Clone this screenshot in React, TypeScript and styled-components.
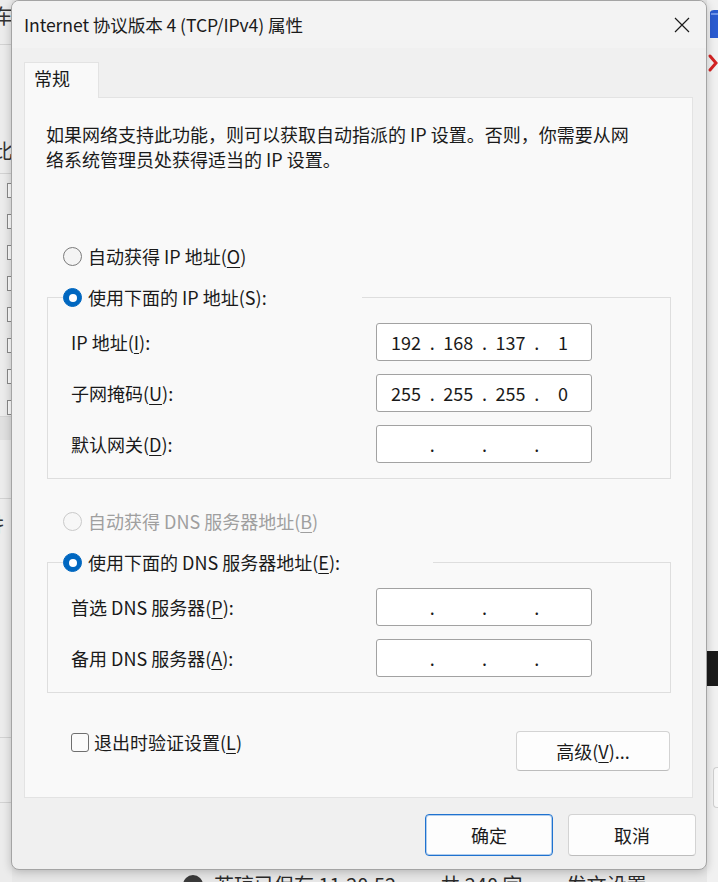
import React from 'react';
import styled, { createGlobalStyle } from 'styled-components';

const GlobalStyle = createGlobalStyle`
  html, body { margin: 0; padding: 0; }
  body {
    font-family: "Noto Sans CJK SC", "Noto Sans", sans-serif;
    background: #e9e9e9;
    color: #1a1a1a;
  }
  * { box-sizing: border-box; }
`;

type IpProps = { octets?: string[] };

const IpField = ({ octets = ['', '', '', ''] }: IpProps) => (
  <IpBox>
    {octets.map((o, i) => (
      <React.Fragment key={i}>
        <Octet>{o}</Octet>
        {i < 3 && <Dot>.</Dot>}
      </React.Fragment>
    ))}
  </IpBox>
);

type RadioProps = { checked?: boolean; disabled?: boolean; children: React.ReactNode };

const Radio = ({ checked, disabled, children }: RadioProps) => (
  <RadioLabel $disabled={disabled}>
    <RadioDot $checked={checked} $disabled={disabled} />
    <span>{children}</span>
  </RadioLabel>
);

const App = () => {
  return (
    <Desktop>
      <GlobalStyle />

      {/* the window behind the dialog, only slivers of it show */}
      <LeftPeek>
        <PeekChar $top={4}>车</PeekChar>
        <PeekRule $top={16} />
        <PeekChar $top={94}>比</PeekChar>
        <PeekRule $top={10} />
        <PeekChecks>
          {[1, 1, 1, 1, 1, 1, 1, 0].map((c, i) => (
            <PeekCheck key={i} $on={!!c} />
          ))}
        </PeekChecks>
        <PeekBand />
        <PeekRule $top={58} />
        <PeekChar $top={14}>扌</PeekChar>
        <PeekRule $top={200} />
        <PeekRule $top={64} />
      </LeftPeek>

      <RightPeek>
        <svg width="11" height="80" viewBox="0 0 11 80">
          <path d="M3 12 Q4 10 7 10 L11 10 L11 38 L3 38 Z" fill="#2a5bd0" />
          <path d="M4 14 L11 14" stroke="#6f95ea" strokeWidth="2" />
          <path d="M3 56 L9 63 L3 70" stroke="#d42323" strokeWidth="3" fill="none" strokeLinecap="round" />
        </svg>
        <DarkBand />
        <PeekBox />
      </RightPeek>

      <StatusLine>
        <StatusIcon />
        <span>若琼已保存 11:20:52</span>
        <span>共 240 字</span>
        <span>发文设置</span>
      </StatusLine>

      <Dialog>
        <TitleBar>
          <TitleText>Internet 协议版本 4 (TCP/IPv4) 属性</TitleText>
          <CloseButton aria-label="关闭">
            <svg width="16" height="16" viewBox="0 0 16 16">
              <path d="M1 1 L15 15 M15 1 L1 15" stroke="#1a1a1a" strokeWidth="1.2" />
            </svg>
          </CloseButton>
        </TitleBar>

        <Body>
          <TabStrip>
            <Tab>常规</Tab>
          </TabStrip>

          <Panel>
            <Description>
              如果网络支持此功能，则可以获取自动指派的 IP 设置。否则，你需要从网
              <br />
              络系统管理员处获得适当的 IP 设置。
            </Description>

            <LooseRadio $top={72}>
              <Radio>
                自动获得 IP 地址(<Key>O</Key>)
              </Radio>
            </LooseRadio>

            <Group $top={16}>
              <GroupLegend $width={299}>
                <Radio checked>使用下面的 IP 地址(S):</Radio>
              </GroupLegend>
              <FieldGrid>
                <FieldLabel>
                  IP 地址(<Key>I</Key>):
                </FieldLabel>
                <IpField octets={['192', '168', '137', '1']} />
                <FieldLabel>
                  子网掩码(<Key>U</Key>):
                </FieldLabel>
                <IpField octets={['255', '255', '255', '0']} />
                <FieldLabel>
                  默认网关(<Key>D</Key>):
                </FieldLabel>
                <IpField />
              </FieldGrid>
            </Group>

            <LooseRadio $top={30}>
              <Radio disabled>
                自动获得 DNS 服务器地址(<Key>B</Key>)
              </Radio>
            </LooseRadio>

            <Group $top={16}>
              <GroupLegend $width={370}>
                <Radio checked>
                  使用下面的 DNS 服务器地址(<Key>E</Key>):
                </Radio>
              </GroupLegend>
              <FieldGrid>
                <FieldLabel>
                  首选 DNS 服务器(<Key>P</Key>):
                </FieldLabel>
                <IpField />
                <FieldLabel>
                  备用 DNS 服务器(<Key>A</Key>):
                </FieldLabel>
                <IpField />
              </FieldGrid>
            </Group>

            <BottomRow>
              <CheckLabel>
                <CheckBox />
                <span>
                  退出时验证设置(<Key>L</Key>)
                </span>
              </CheckLabel>
              <AdvancedButton>
                高级(<Key>V</Key>)...
              </AdvancedButton>
            </BottomRow>
          </Panel>

          <Footer>
            <DialogButton $primary>确定</DialogButton>
            <DialogButton>取消</DialogButton>
          </Footer>
        </Body>
      </Dialog>
    </Desktop>
  );
};

export default App;

const Desktop = styled.div`
  position: relative;
  width: 718px;
  height: 882px;
  overflow: hidden;
  background: #e7e7e7;
`;

const LeftPeek = styled.div`
  position: absolute;
  left: 0;
  top: 0;
  width: 12px;
  height: 882px;
  background: #ececec;
  display: flex;
  flex-direction: column;
  overflow: hidden;
`;

const PeekChar = styled.div<{ $top: number }>`
  margin-top: ${p => p.$top}px;
  margin-left: -7px;
  font-size: 20px;
  line-height: 24px;
  color: #333;
  flex: none;
`;

const PeekRule = styled.div<{ $top: number }>`
  margin-top: ${p => p.$top}px;
  height: 1px;
  background: #d2d2d2;
  flex: none;
`;

const PeekChecks = styled.div`
  margin-top: 9px;
  padding-left: 7px;
  display: flex;
  flex-direction: column;
  gap: 16px;
`;

const PeekCheck = styled.div<{ $on: boolean }>`
  width: 14px;
  height: 15px;
  border: 1px solid #8a8a8a;
  background: #fff;
  box-shadow: ${p => (p.$on ? 'inset 3px 0 0 1px #fff, inset 6px 0 0 #555' : 'none')};
`;

const PeekBand = styled.div`
  margin-top: 1px;
  height: 24px;
  background: #e0e0e0;
  border-top: 1px solid #d4d4d4;
  flex: none;
`;

const RightPeek = styled.div`
  position: absolute;
  left: 707px;
  top: 0;
  width: 11px;
  height: 882px;
  background: #f1f1f1;
  display: flex;
  flex-direction: column;
`;

const DarkBand = styled.div`
  margin-top: 571px;
  height: 35px;
  background: #1b1b1b;
  flex: none;
`;

const PeekBox = styled.div`
  margin: 81px 0 0 6px;
  height: 41px;
  border: 1px solid #d0d0d0;
  border-right: none;
  border-radius: 4px 0 0 4px;
  background: #f8f8f8;
  flex: none;
`;

const StatusLine = styled.div`
  position: absolute;
  left: 183px;
  top: 872px;
  display: flex;
  align-items: flex-start;
  gap: 44px;
  font-size: 20px;
  line-height: 26px;
  color: #2a2a2a;
  white-space: nowrap;

  span:first-of-type {
    margin-left: -33px;
  }
`;

const StatusIcon = styled.div`
  width: 20px;
  height: 20px;
  margin-top: 3px;
  border-radius: 50%;
  background: #3a3a3a;
`;

const Dialog = styled.div`
  position: absolute;
  left: 11px;
  top: 0;
  width: 696px;
  height: 870px;
  background: #f0f0f0;
  border: 1px solid #a4a4a4;
  border-radius: 8px;
  overflow: hidden;
  box-shadow: 0 2px 10px rgba(0, 0, 0, 0.22);
  display: flex;
  flex-direction: column;
  z-index: 1;
`;

const TitleBar = styled.div`
  height: 47px;
  flex: none;
  background: #f3f3f3;
  display: flex;
  align-items: center;
  justify-content: space-between;
  padding-left: 12px;
`;

const TitleText = styled.div`
  font-size: 17.6px;
  line-height: 25px;
  letter-spacing: -0.1px;
  color: #1a1a1a;
`;

const CloseButton = styled.div`
  width: 46px;
  height: 47px;
  display: flex;
  align-items: center;
  justify-content: center;
  margin-right: 1px;
`;

const Body = styled.div`
  flex: 1;
  padding: 14px 13px 13px 12px;
  display: flex;
  flex-direction: column;
`;

const TabStrip = styled.div`
  display: flex;
  position: relative;
  z-index: 1;
`;

const Tab = styled.div`
  width: 75px;
  height: 36px;
  margin-bottom: -1px;
  padding: 2px 0 0 9px;
  background: #f9f9f9;
  border: 1px solid #e3e3e3;
  border-bottom: none;
  font-size: 18px;
  line-height: 26px;
`;

const Panel = styled.div`
  height: 701px;
  flex: none;
  background: #f9f9f9;
  border: 1px solid #e3e3e3;
  padding: 0 21px 0 22px;
  display: flex;
  flex-direction: column;
`;

const Description = styled.div`
  padding-top: 24px;
  margin-left: -1px;
  font-size: 18px;
  line-height: 25px;
  white-space: nowrap;
`;

const Key = styled.span`
  text-decoration: underline;
  text-decoration-thickness: 1px;
  text-underline-offset: 3px;
`;

const LooseRadio = styled.div<{ $top: number }>`
  margin: ${p => p.$top}px 0 0 16px;
`;

const RadioLabel = styled.label<{ $disabled?: boolean }>`
  display: flex;
  align-items: center;
  height: 25px;
  gap: 6px;
  font-size: 18px;
  line-height: 25px;
  white-space: nowrap;
  color: ${p => (p.$disabled ? '#9f9f9f' : '#1a1a1a')};
`;

const RadioDot = styled.span<{ $checked?: boolean; $disabled?: boolean }>`
  width: 19px;
  height: 19px;
  flex: none;
  border-radius: 50%;
  border: 1px solid
    ${p => (p.$disabled ? '#cacaca' : p.$checked ? '#0067c0' : '#7b7b7b')};
  background: ${p => (p.$checked ? '#0067c0' : p.$disabled ? '#f7f7f7' : '#f4f4f4')};
  display: flex;
  align-items: center;
  justify-content: center;

  &::after {
    content: '';
    display: ${p => (p.$checked ? 'block' : 'none')};
    width: 8px;
    height: 8px;
    border-radius: 50%;
    background: #ffffff;
  }
`;

const Group = styled.fieldset<{ $top: number }>`
  margin: ${p => p.$top}px 0 0 0;
  padding: 13px 0 15px 15px;
  border: 1px solid #dedede;
  min-width: 0;
`;

const GroupLegend = styled.legend<{ $width: number }>`
  padding: 0;
  width: ${p => p.$width}px;
  height: 25px;
`;

const FieldGrid = styled.div`
  display: grid;
  grid-template-columns: 305px 216px;
  row-gap: 13px;
  align-items: center;
  margin-left: 8px;
`;

const FieldLabel = styled.div`
  font-size: 18px;
  line-height: 25px;
  white-space: nowrap;
`;

const IpBox = styled.div`
  width: 216px;
  height: 38px;
  background: #ffffff;
  border: 1px solid #a2a2a2;
  border-radius: 3px;
  padding-left: 7px;
  display: grid;
  grid-template-columns: 44px 8.3px 44px 8.3px 44px 8.3px 44px;
  align-items: center;
  font-size: 18px;
  line-height: 25px;
`;

const Octet = styled.span`
  text-align: center;
`;

const Dot = styled.span`
  text-align: center;
`;

const BottomRow = styled.div`
  margin-top: 38px;
  display: flex;
  align-items: flex-start;
  justify-content: space-between;
`;

const CheckLabel = styled.label`
  margin: -1px 0 0 24px;
  display: flex;
  align-items: center;
  gap: 5px;
  height: 25px;
  font-size: 18px;
  line-height: 25px;
`;

const CheckBox = styled.span`
  width: 18px;
  height: 19px;
  border: 1px solid #6f6f6f;
  border-radius: 3px;
  background: #fbfbfb;
`;

const AdvancedButton = styled.button`
  width: 154px;
  height: 40px;
  margin-right: 1px;
  background: #fdfdfd;
  border: 1px solid #d3d3d3;
  border-bottom-color: #bdbdbd;
  border-radius: 4px;
  font-family: inherit;
  font-size: 18px;
  color: #1a1a1a;
  padding: 0;
`;

const Footer = styled.div`
  margin: 16px -3px 0 0;
  display: flex;
  justify-content: flex-end;
  gap: 15px;
`;

const DialogButton = styled.button<{ $primary?: boolean }>`
  width: 128px;
  height: 42px;
  background: #fdfdfd;
  border: 1px solid ${p => (p.$primary ? '#1f72cf' : '#d3d3d3')};
  border-bottom-color: ${p => (p.$primary ? '#1f72cf' : '#bdbdbd')};
  box-shadow: ${p => (p.$primary ? 'inset 0 0 0 1px rgba(31, 114, 207, 0.35)' : 'none')};
  border-radius: 4px;
  font-family: inherit;
  font-size: 18px;
  color: #1a1a1a;
  padding: 0;
`;
